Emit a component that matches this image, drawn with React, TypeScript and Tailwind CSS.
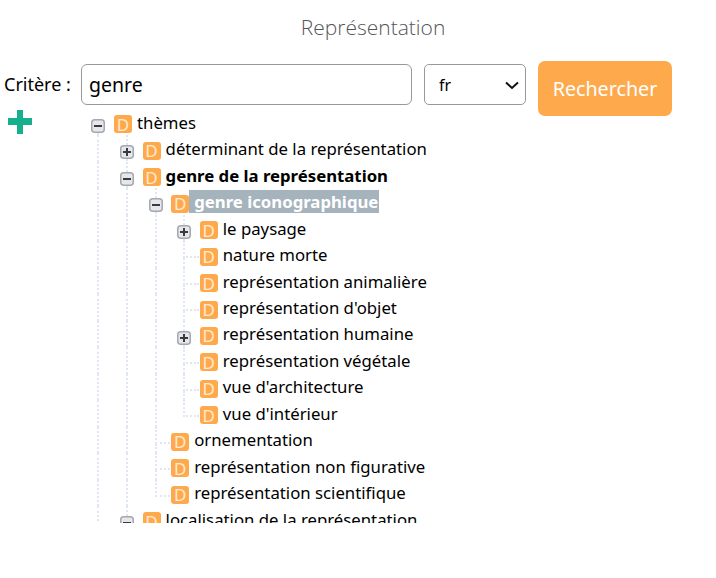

const rows: { t: string; depth: number; toggle?: "plus" | "minus"; bold?: boolean; sel?: boolean; last?: boolean; root?: boolean }[] = [
  { t: "thèmes", depth: 0, toggle: "minus", root: true },
  { t: "déterminant de la représentation", depth: 1, toggle: "plus" },
  { t: "genre de la représentation", depth: 1, toggle: "minus", bold: true },
  { t: "genre iconographique", depth: 2, toggle: "minus", sel: true },
  { t: "le paysage", depth: 3, toggle: "plus" },
  { t: "nature morte", depth: 3 },
  { t: "représentation animalière", depth: 3 },
  { t: "représentation d'objet", depth: 3 },
  { t: "représentation humaine", depth: 3, toggle: "plus" },
  { t: "représentation végétale", depth: 3 },
  { t: "vue d'architecture", depth: 3 },
  { t: "vue d'intérieur", depth: 3, last: true },
  { t: "ornementation", depth: 2 },
  { t: "représentation non figurative", depth: 2 },
  { t: "représentation scientifique", depth: 2, last: true },
  { t: "localisation de la représentation", depth: 1, toggle: "minus" },
];

function Toggle({ kind }: { kind: "plus" | "minus" }) {
  return (
    <svg width="14" height="14" viewBox="0 0 14 14" className="shrink-0">
      <rect x="0.75" y="0.75" width="12.5" height="12.5" rx="3" fill="#e6e7ea" stroke="#a6a8b1" strokeWidth="1.5" />
      <rect x="3" y="6" width="8" height="2" fill="#3a3a3a" />
      {kind === "plus" && <rect x="6" y="3" width="2" height="8" fill="#3a3a3a" />}
    </svg>
  );
}

function Row({ r }: { r: (typeof rows)[number] }) {
  const line = "border-l-2 border-dotted border-[#e0e6f4]";
  return (
    <div className="flex h-[26.47px] items-stretch">
      {Array.from({ length: r.depth }).map((_, i) => (
        <div key={i} className="w-[28.6px] shrink-0">
          <div className={`ml-[13px] h-full ${line}`} />
        </div>
      ))}
      {r.toggle ? (
        <div className="flex w-[28.6px] shrink-0 flex-col">
          <div className={`ml-[13px] h-[10px] shrink-0 ${r.root ? "" : line}`} />
          <div className="ml-[7px]">
            <Toggle kind={r.toggle} />
          </div>
          <div className={`ml-[13px] flex-1 ${line}`} />
        </div>
      ) : (
        <div className="flex w-[28.6px] shrink-0 flex-col">
          <div className={`ml-[13px] h-[17px] shrink-0 border-b-2 ${line}`} />
          {!r.last && <div className={`ml-[13px] flex-1 ${line}`} />}
        </div>
      )}
      <div className="flex items-center">
        <span className="ml-[1px] mt-[4px] flex h-[18px] w-[18px] shrink-0 items-center justify-center rounded-[3px] bg-[#ffa94d] text-[17px] leading-none text-[#ffe9d2]">
          D
        </span>
        <span
          className={`whitespace-nowrap pl-[5px] text-[16.75px] leading-[23px] ${r.bold ? "font-bold" : ""} ${r.sel ? "bg-[#a5b3bd] pr-[1px] font-bold text-white" : "text-black"}`}
        >
          {r.t}
        </span>
      </div>
    </div>
  );
}

export default function App() {
  return (
    <div className="h-[578px] w-[716px] overflow-hidden bg-white font-['Noto_Sans','Open_Sans',sans-serif]">
      <h1 className="pt-[12px] pl-[30px] text-center font-['Open_Sans',sans-serif] text-[21px] font-light leading-[30px] text-[#555]">Représentation</h1>
      <div className="mt-[19px] flex items-start pl-[4px]">
        <label className="mt-[11px] w-[77px] shrink-0 text-[18px] leading-[24px] text-black">Critère :</label>
        <div className="mt-[3px] flex h-[41px] w-[331px] items-center rounded-[6px] border border-[#999] px-[7px] text-[19.5px] text-black">
          genre
        </div>
        <div className="ml-[12px] mt-[3px] flex h-[41px] w-[102px] items-center justify-between rounded-[5px] border border-[#999] pl-[14px] pr-[6px] text-[16px] text-black">
          fr
          <svg width="14" height="14" viewBox="0 0 14 14" fill="none" stroke="#111" strokeWidth="2">
            <path d="M1 4.5 L7 10 L13 4.5" />
          </svg>
        </div>
        <div className="ml-[12px] flex h-[55px] w-[134px] items-center justify-center rounded-[7px] bg-[#ffa94d] text-[19.7px] text-white">
          Rechercher
        </div>
      </div>
      <div className="flex items-start">
        <svg width="24" height="24" viewBox="0 0 24 24" className="ml-[8px] mt-[-6px] shrink-0">
          <path d="M9 0h6v8h9v7h-9v9H9v-9H0V8h9z" fill="#17b08f" />
        </svg>
        <div className="ml-[52.4px] mt-[-7px] h-[414px] overflow-hidden">
          {rows.map((r) => (
            <Row key={r.t} r={r} />
          ))}
        </div>
      </div>
    </div>
  );
}
